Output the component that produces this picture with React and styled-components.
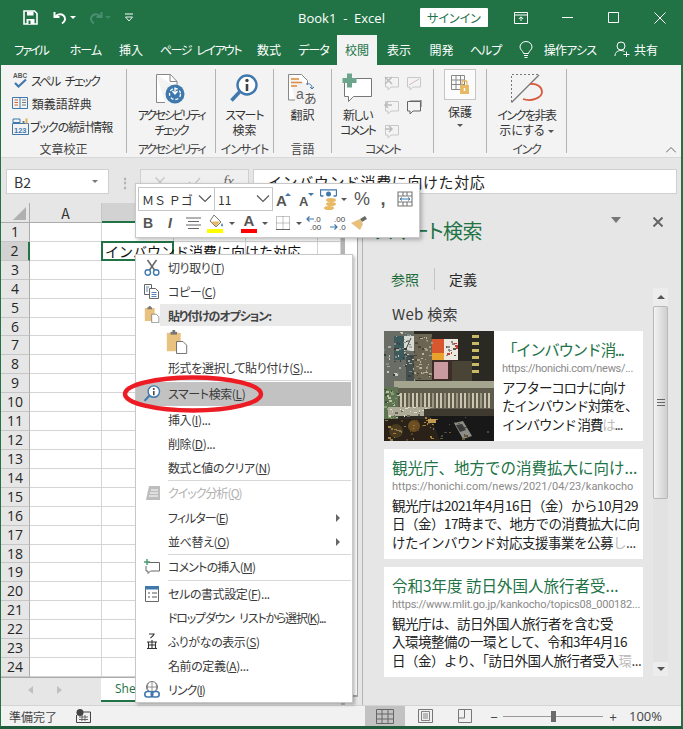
import React from "react";
import styled, { createGlobalStyle } from "styled-components";

const GREEN = "#217346";
const UI_FONT = `"Noto Sans CJK JP", "Noto Sans", sans-serif`;

const GlobalStyle = createGlobalStyle`
    html, body {
        margin: 0;
        padding: 0;
        background: #e6e6e6;
    }
    * {
        box-sizing: border-box;
    }
    body {
        font-family: ${UI_FONT};
        font-feature-settings: "palt";
        color: #262626;
    }
`;

const Root = styled.div`
    position: relative;
    width: 683px;
    height: 729px;
    overflow: hidden;
    display: flex;
    flex-direction: column;
    background: #e6e6e6;
    border-left: 1px solid ${GREEN};
    border-right: 2px solid ${GREEN};
    border-bottom: 3px solid #1f5c3c;
`;

// kana in the original UI font is a lot narrower, so squeeze per string
const Track = styled.span`
    letter-spacing: ${p => p.$t}px;
    word-spacing: 4px;
`;

/* title bar */
const TitleBar = styled.header`
    height: 35px;
    flex: none;
    margin: 0 -2px 0 -1px;
    display: flex;
    align-items: center;
    background: ${GREEN};
    color: #fff;
    font-size: 13px;
`;

const Slot = styled.div`
    width: ${p => p.$w}px;
    flex: none;
    display: flex;
    align-items: center;
    justify-content: center;
`;

const Mirror = styled.span`
    display: flex;
    transform: scaleX(-1);
`;

const WindowTitle = styled.div`
    width: 143px;
    flex: none;
    text-align: center;
    white-space: pre;
    font-family: "Open Sans", ${UI_FONT};
    font-size: 13px;
`;

const SignIn = styled.div`
    width: 68px;
    height: 19px;
    flex: none;
    background: #fff;
    border-radius: 1px;
    color: ${GREEN};
    font-size: 12px;
    line-height: 19px;
    text-align: center;
`;

/* ribbon tabs */
const TabRow = styled.nav`
    height: 30px;
    flex: none;
    margin: 0 -2px 0 -1px;
    display: flex;
    align-items: stretch;
    background: ${GREEN};
`;

const Tab = styled.div`
    width: ${p => p.$w}px;
    flex: none;
    display: flex;
    align-items: center;
    justify-content: center;
    gap: 4px;
    padding-bottom: 1px;
    white-space: nowrap;
    overflow: hidden;
    font-size: 12px;
    letter-spacing: ${p => p.$track || 0}px;
    word-spacing: 4px;
    color: ${p => (p.$active ? GREEN : "#fff")};
    background: ${p => (p.$active ? "#f3f3f3" : "transparent")};
`;

/* ribbon */
const Ribbon = styled.section`
    height: 93px;
    flex: none;
    display: flex;
    position: relative;
    background: #f3f3f3;
    padding: 4px 0;
    border-bottom: 1px solid #d8d8d8;
`;

const Group = styled.div`
    width: ${p => p.$w}px;
    flex: none;
    display: flex;
    flex-direction: column;
    align-items: center;
    border-right: ${p => (p.$last ? "none" : "1px solid #b4b4b4")};
`;

const GroupBody = styled.div`
    flex: 1;
    width: 100%;
    display: flex;
    justify-content: center;
    gap: ${p => p.$gap || 0}px;
    min-height: 0;
`;

const GroupLabel = styled.div`
    height: 14px;
    flex: none;
    font-size: 12px;
    line-height: 20px;
    color: #444;
    white-space: nowrap;
`;

const SmallList = styled.div`
    display: flex;
    flex-direction: column;
    gap: 1px;
    width: 100%;
    padding: 0 0 0 11px;
`;

const SmallItem = styled.div`
    height: 22px;
    display: flex;
    align-items: center;
    gap: 1px;
    font-size: 12px;
    white-space: nowrap;
    color: #333;
`;

const BigButton = styled.div`
    display: flex;
    flex-direction: column;
    align-items: center;
    padding-top: ${p => p.$top ?? 4}px;
    font-size: 12px;
    line-height: 15px;
    text-align: center;
    white-space: nowrap;
    color: #333;
`;

const BigIcon = styled.div`
    height: ${p => p.$h || 34}px;
    margin-bottom: ${p => p.$gap ?? 2}px;
    display: flex;
    align-items: center;
    justify-content: center;
`;

const ProtectBox = styled.div`
    width: 32px;
    height: 31px;
    display: flex;
    align-items: center;
    justify-content: center;
    background: #fbfbfb;
    border: 1px solid #c6c6c6;
`;

const CommentGrid = styled.div`
    display: grid;
    grid-template-columns: 22px 22px;
    grid-auto-rows: 24px;
    align-items: center;
    justify-items: center;
    margin-top: 3px;
    margin-left: 2px;
`;

const Caret = styled.span`
    display: inline-block;
    width: 0;
    height: 0;
    margin: ${p => p.$m || "0 0 0 3px"};
    border-left: 3px solid transparent;
    border-right: 3px solid transparent;
    border-top: 3px solid ${p => p.$c || "#555"};
    vertical-align: middle;
`;

const CollapseChevron = styled.svg`
    position: absolute;
    right: 5px;
    bottom: 4px;
`;

/* formula bar */
const FormulaBar = styled.div`
    height: 45px;
    flex: none;
    display: flex;
    align-items: flex-start;
    padding: 11px 4px 0 5px;
    background: #e6e6e6;
`;

const FieldBox = styled.div`
    height: 25px;
    width: ${p => p.$w || "auto"};
    flex: ${p => (p.$w ? "none" : 1)};
    display: flex;
    align-items: center;
    justify-content: space-between;
    padding: 0 ${p => p.$pad || 7}px;
    background: ${p => p.$bg || "#fff"};
    border: 1px solid #d0d0d0;
    font-size: 14px;
    white-space: nowrap;
    color: #333;
`;

const FormulaText = styled.span`
    font-size: 15px;
    letter-spacing: 0.6px;
    font-feature-settings: normal;
    color: #222;
`;

const FxText = styled.span`
    font-family: "Liberation Serif", serif;
    font-style: italic;
    font-size: 15px;
    color: #666;
`;

const Dots = styled.div`
    width: 31px;
    flex: none;
    text-align: center;
    color: #aaa;
    font-size: 12px;
    line-height: 25px;
    font-weight: 700;
`;

/* sheet */
const Workspace = styled.div`
    flex: 1;
    min-height: 0;
    display: flex;
    align-items: stretch;
`;

const SheetColumn = styled.div`
    width: 340px;
    flex: none;
    display: flex;
    flex-direction: column;
`;

const Grid = styled.div`
    height: 474px;
    flex: none;
    display: grid;
    grid-template-columns: 29px 72px 72px 72px 72px 23px;
    grid-template-rows: 20px repeat(24, minmax(0, 1fr));
    background: #fff;
    overflow: hidden;
`;

const Corner = styled.div`
    background: #e6e6e6;
    border-right: 1px solid #ababab;
    border-bottom: 1px solid #ababab;
    display: flex;
    align-items: flex-end;
    justify-content: flex-end;
    padding: 0 3px 2px 0;
`;

const ColHead = styled.div`
    display: flex;
    align-items: center;
    justify-content: center;
    padding-left: ${p => (p.$selected ? "8px" : 0)};
    font-size: 14px;
    line-height: 16px;
    color: #333;
    background: ${p => (p.$selected ? "#d2d2d2" : "#e6e6e6")};
    border-right: 1px solid #c6c6c6;
    border-bottom: ${p => (p.$selected ? `2px solid ${GREEN}` : "1px solid #ababab")};
`;

const RowHead = styled.div`
    display: flex;
    align-items: center;
    justify-content: center;
    font-size: 14px;
    line-height: 16px;
    font-family: "Open Sans", sans-serif;
    color: #262626;
    background: ${p => (p.$selected ? "#d2d2d2" : "#e6e6e6")};
    border-bottom: 1px solid #c6c6c6;
    border-right: ${p => (p.$selected ? `2px solid ${GREEN}` : "1px solid #ababab")};
`;

const Cell = styled.div`
    background: transparent;
    border-right: 1px solid #d4d4d4;
    border-bottom: 1px solid #d4d4d4;
`;

const ActiveCell = styled.div`
    position: relative;
    z-index: 1;
    margin: -1px 0 0 -1px;
    padding: 0 0 0 2px;
    border: 2px solid ${GREEN};
    font-size: 14px;
    font-feature-settings: normal;
    line-height: 16px;
    white-space: nowrap;
    color: #111;
`;

const SheetTabs = styled.div`
    flex: 1;
    display: flex;
    background: #e6e6e6;
    border-top: 1px solid #ababab;
`;

const NavArrows = styled.div`
    width: 100px;
    height: 24px;
    flex: none;
    display: flex;
    align-items: center;
    gap: 24px;
    padding-left: 27px;
`;

const SheetTab = styled.div`
    width: 70px;
    height: 24px;
    padding-left: 14px;
    background: #fff;
    border-bottom: 2px solid ${GREEN};
    color: ${GREEN};
    font-size: 12px;
    line-height: 22px;
    font-family: "Open Sans", sans-serif;
`;

const SheetScroll = styled.div`
    width: 18px;
    flex: none;
    display: flex;
    flex-direction: column;
    background: #e6e6e6;
    border-left: 4px solid #b5b5b5;
    padding-bottom: 29px;
`;

const SheetThumb = styled.div`
    flex: 1;
    margin-top: 20px;
    width: 13px;
    background: #fff;
    border-bottom: 2px solid #a8a8a8;
    border-right: 1px solid #a8a8a8;
`;

/* smart lookup pane */
const Pane = styled.aside`
    flex: 1;
    min-width: 0;
    margin-left: 3px;
    padding: 0 0 0 12px;
    display: flex;
    flex-direction: column;
    background: #e6e6e6;
    border-left: 1px solid #b4b4b4;
    margin-bottom: 2px;
`;

const PaneHead = styled.div`
    height: 56px;
    flex: none;
    display: flex;
    align-items: flex-start;
    padding-top: 14px;
    color: ${GREEN};
    font-size: 20px;
    line-height: 28px;
`;

const PaneTitle = styled.div`
    width: 236px;
    flex: none;
    white-space: nowrap;
    letter-spacing: -0.6px;
`;

const PaneTabs = styled.div`
    height: 22px;
    flex: none;
    margin: 9px 0 0 16px;
    display: flex;
    align-items: center;
    font-size: 14px;
`;

const PaneTab = styled.div`
    padding-right: ${p => (p.$divided ? "15px" : 0)};
    padding-left: ${p => (p.$divided ? 0 : "14px")};
    line-height: 22px;
    color: ${p => (p.$active ? "#1a6a3a" : "#262626")};
    border-right: ${p => (p.$divided ? "1px solid #c4c4c4" : "none")};
`;

const PaneBody = styled.div`
    flex: 1;
    min-height: 0;
    margin-top: -2px;
    display: flex;
    justify-content: space-between;
`;

const Results = styled.div`
    width: 259px;
    margin-left: 9px;
    flex: none;
    display: flex;
    flex-direction: column;
    gap: 8px;
`;

const SectionTitle = styled.div`
    height: 43px;
    margin-left: 8px;
    padding-top: 13px;
    font-size: 15px;
    line-height: 26px;
    color: #3a3a3a;
    letter-spacing: 0.3px;
`;

const Card = styled.article`
    height: 110px;
    flex: none;
    display: flex;
    background: #fff;
`;

const Photo = styled.svg`
    flex: none;
    display: block;
`;

const CardText = styled.div`
    flex: 1;
    min-width: 0;
    padding: 7px 0 0 8px;
    overflow: hidden;
    font-feature-settings: normal;
`;

const CardTitle = styled.div`
    height: 22px;
    font-size: 15.5px;
    line-height: 22px;
    letter-spacing: ${p => p.$track || 0}px;
    color: ${GREEN};
    white-space: nowrap;
`;

const CardUrl = styled.div`
    height: 17.5px;
    font-family: Roboto, sans-serif;
    font-size: 11px;
    line-height: 17px;
    letter-spacing: ${p => p.$track || 0}px;
    color: #8a8a8a;
    white-space: nowrap;
`;

const CardLine = styled.div`
    height: 18.7px;
    font-size: 13.5px;
    line-height: 19px;
    letter-spacing: ${p => p.$track ?? -0.5}px;
    color: #222;
    white-space: nowrap;
`;

const Fade = styled.span`
    color: #bbb;
`;

const PaneScroll = styled.div`
    width: 15px;
    flex: none;
    margin-right: 13px;
    display: flex;
    flex-direction: column;
    align-items: center;
    background: #e2e2e2;
    height: 388px;
`;

const ScrollButton = styled.div`
    height: ${p => p.$h}px;
    width: 100%;
    flex: none;
    display: flex;
    align-items: center;
    justify-content: center;
    background: #ececec;
`;

const PaneThumb = styled.div`
    width: 100%;
    height: 193px;
    flex: none;
    display: flex;
    align-items: center;
    justify-content: center;
    background: linear-gradient(to right, #f2f2f2, #cfcfcf);
    border: 1px solid #b8b8b8;
    border-radius: 2px;
`;

const ScrollFill = styled.div`
    flex: 1;
`;

/* status bar */
const StatusBar = styled.footer`
    position: absolute;
    left: 0;
    right: 0;
    bottom: 0;
    height: 21px;
    display: flex;
    align-items: center;
    background: #f1f1f1;
    border-top: 1px solid #d4d4d4;
    font-size: 12px;
    color: #444;
`;

const StatusText = styled.div`
    width: 75px;
    flex: none;
    padding-left: 8px;
    white-space: nowrap;
`;

const ViewButton = styled.div`
    width: 40px;
    height: 21px;
    flex: none;
    display: flex;
    align-items: center;
    justify-content: center;
    background: ${p => (p.$active ? "#c2c2c2" : "transparent")};
`;

const Zoomer = styled.div`
    width: 100px;
    height: 1px;
    flex: none;
    background: #9a9a9a;
    position: relative;
`;

const ZoomThumb = styled.div`
    position: absolute;
    left: 48px;
    top: -5px;
    width: 5px;
    height: 11px;
    background: #6a6a6a;
`;

const ZoomSign = styled.div`
    width: ${p => p.$w}px;
    flex: none;
    text-align: center;
    font-size: 13px;
    color: #444;
`;

const ZoomValue = styled.div`
    flex: none;
    margin-left: 6px;
    font-family: "Open Sans", sans-serif;
    font-size: 13px;
    color: #444;
`;

/* mini toolbar, floats over the sheet */
const MiniBar = styled.div`
    position: absolute;
    left: 134px;
    top: 183px;
    width: 285px;
    height: 55px;
    z-index: 5;
    padding: 3px;
    display: flex;
    flex-direction: column;
    background: #fff;
    border: 1px solid #c8c8c8;
    box-shadow: 2px 2px 4px rgba(0, 0, 0, 0.25);
`;

const MiniRow = styled.div`
    height: 24px;
    flex: none;
    display: flex;
    align-items: center;
`;

const MiniField = styled.div`
    width: ${p => p.$w}px;
    height: 24px;
    flex: none;
    margin-left: -1px;
    padding: 0 2px 0 3px;
    display: flex;
    align-items: center;
    justify-content: space-between;
    border: 1px solid #c6c6c6;
    font-size: 12px;
    font-feature-settings: normal;
    color: #333;
    white-space: nowrap;
    overflow: hidden;

    & > svg {
        flex: none;
    }
`;

const MiniCell = styled.div`
    width: ${p => p.$w}px;
    flex: none;
    display: flex;
    align-items: center;
    justify-content: center;
    font-size: ${p => p.$size || 14}px;
    font-weight: ${p => p.$weight || 400};
    font-style: ${p => (p.$italic ? "italic" : "normal")};
    font-family: "Liberation Sans", sans-serif;
    color: #555;
`;

const ColorLetter = styled.div`
    display: flex;
    flex-direction: column;
    align-items: center;
    font-size: 15px;
    line-height: 14px;
    font-weight: 700;
    font-family: "Liberation Sans", sans-serif;
    color: #555;
`;

const ColorBar = styled.div`
    width: 16px;
    height: 4px;
    margin-top: 1px;
    background: ${p => p.$c};
`;

/* context menu */
const Menu = styled.ul`
    position: absolute;
    left: 134px;
    top: 254px;
    width: 218px;
    height: 449px;
    z-index: 4;
    margin: 0;
    padding: 1px 0 0;
    list-style: none;
    background: #fff;
    border: 1px solid #c8c8c8;
    box-shadow: 2px 2px 3px rgba(0, 0, 0, 0.25);
`;

const MenuItem = styled.li`
    height: ${p => p.$h || 24}px;
    margin: 0 1px ${p => p.$mb || 0}px 0;
    padding-bottom: 1px;
    display: flex;
    align-items: center;
    background: ${p => (p.$hover ? "#c2c2c2" : "transparent")};
    color: ${p => (p.$disabled ? "#b0b0b0" : "#3a3a3a")};
    font-size: 12px;
    letter-spacing: ${p => p.$track ?? -0.4}px;
    word-spacing: 4px;
    white-space: nowrap;
    position: relative;
`;

const MenuIcon = styled.span`
    width: 32px;
    flex: none;
    display: flex;
    align-items: center;
    justify-content: center;
`;

const MenuHeader = styled.span`
    flex: 1;
    align-self: stretch;
    margin: 0 0 -1px -8px;
    padding-left: 8px;
    display: flex;
    align-items: center;
    background: #e9e9e9;
    font-weight: 700;
    letter-spacing: -1.1px;
    color: #444;
`;

const SubArrow = styled.span`
    position: absolute;
    right: 11px;
    top: 8px;
    width: 0;
    height: 0;
    border-top: 4px solid transparent;
    border-bottom: 4px solid transparent;
    border-left: 4px solid #666;
`;

const MenuSep = styled.li`
    height: 1px;
    margin: ${p => p.$mt || 0}px 1px ${p => p.$mb || 0}px 32px;
    background: #d8d8d8;
`;

const PasteRow = styled.li`
    height: 30px;
    padding: 4px 0 0 30px;
`;

const Mnemonic = styled.u`
    text-underline-offset: 1px;
`;

const Callout = styled.svg`
    position: absolute;
    left: 119px;
    top: 373px;
    z-index: 6;
    pointer-events: none;
`;

/* drawings */
const I = ({ w = 16, h = 16, children, vb }) => (
    <svg width={w} height={h} viewBox={vb || `0 0 ${w} ${h}`} fill="none">
        {children}
    </svg>
);

const SaveIcon = () => (
    <I w={15} h={15}>
        <path d="M1 1h10.500L14 3.500V14H1z" stroke="#fff" strokeWidth="1.600" />
        <path d="M4 1.500h6.500v4H4z" fill="#fff" />
        <path d="M3.500 9h8v5h-8z" fill="#fff" />
        <path d="M5.500 10.500h2v3.500h-2z" fill={GREEN} />
    </I>
);

const UndoIcon = ({ c = "#fff" }) => (
    <I w={15} h={14}>
        <path d="M1.500 1v5h5" stroke={c} strokeWidth="2" />
        <path d="M2 6c2-3 6-3.500 8.500-1.500 2.500 2.500 2 6-1.500 8" stroke={c} strokeWidth="2" />
    </I>
);

const RedoIcon = () => (
    <Mirror>
        <UndoIcon c="#4a9070" />
    </Mirror>
);

const CustomizeIcon = () => (
    <I w={10} h={9}>
        <path d="M1 1h8" stroke="#fff" />
        <path d="M1.500 4h7L5 8z" stroke="#fff" strokeWidth="0.900" />
    </I>
);

const Bulb = () => (
    <I w={14} h={18}>
        <path d="M4.500 12.500C4 9.500 1 9 1 6a6 5.500 0 0 1 12 0c0 3-3 3.500-3.500 6.500z" stroke="#fff" />
        <path d="M5 14.500h4M5.500 16.500h3" stroke="#fff" />
    </I>
);

const Person = () => (
    <I w={16} h={17}>
        <circle cx="7" cy="5" r="4" stroke="#fff" />
        <path d="M1 15c0-4 3-5.500 6-5.500 1.500 0 2.500.3 3.500 1" stroke="#fff" />
        <path d="M12.500 10.500v5.500M9.500 13.500h6" stroke="#fff" />
    </I>
);

const RibbonDisplay = () => (
    <I w={14} h={12}>
        <path d="M.5.500h13v11H.5z" stroke="#fff" />
        <path d="M.5 3h13" stroke="#fff" />
        <path d="M7 9V5M4.800 7L7 4.800 9.200 7" stroke="#fff" />
    </I>
);

const Minimize = () => <I w={11} h={11}><path d="M0 5.500h11" stroke="#fff" /></I>;
const Maximize = () => <I w={11} h={11}><path d="M.5.500h10v10H.5z" stroke="#fff" /></I>;
const CloseIcon = ({ c = "#fff", sw = 1, s = 12 }) => (
    <I w={s} h={s}><path d={`M.5.500L${s - 0.5} ${s - 0.5}M${s - 0.5} .500L.5 ${s - 0.5}`} stroke={c} strokeWidth={sw} /></I>
);

const CheckMark = () => (
    <I w={13} h={10}><path d="M1 5l4 4 7-8" stroke="#c8c8c8" strokeWidth="1.500" /></I>
);

const SpellIcon = () => (
    <I w={18} h={18}>
        <text x="1" y="7" fontSize="6.500" fontWeight="700" fontFamily="Liberation Sans" fill="#555">ABC</text>
        <path d="M3 12l3.500 3.500L14 8.500" stroke="#3f78ad" strokeWidth="2.200" />
    </I>
);

const BookIcon = () => (
    <I w={16} h={14}>
        <path d="M.5 1.500h15v11H.5z" stroke="#3f78ad" />
        <path d="M8 1.500v11" stroke="#3f78ad" />
        <path d="M2.500 4h3.500M2.500 6.500h3.500M2.500 9h3.500" stroke="#d2622a" />
        <path d="M10 4h4M10 6.500h4M10 9h4" stroke="#777" />
    </I>
);

const StatsIcon = () => (
    <I w={17} h={17}>
        <path d="M.5 5.500h16v11H.5z" stroke="#3f78ad" />
        <path d="M1 1h7v3.500H1z" stroke="#3f78ad" />
        <path d="M10.500 3h2v2.500h-2z" fill="#777" />
        <path d="M13.500 .500h2v5h-2z" fill="#e0b060" />
        <text x="2" y="14.500" fontSize="7.500" fontWeight="700" fontFamily="Liberation Sans" fill="#3f78ad">123</text>
    </I>
);

const A11yIcon = () => (
    <I w={30} h={30}>
        <path d="M.5.500h14l6.500 7V14M.5.500V28.500H9" stroke="#888" fill="#fff" />
        <path d="M14 .500v7h7" stroke="#888" />
        <circle cx="19" cy="20" r="9.500" fill="#3f78ad" />
        <circle cx="19" cy="20" r="5.500" stroke="#fff" strokeWidth="1.300" strokeDasharray="3 2" />
        <path d="M19 13.500v6M16.500 17l2.500 3 2.500-3" stroke="#fff" strokeWidth="1.300" />
    </I>
);

const SmartIcon = ({ s = 30 }) => (
    <I w={s} h={s} vb="0 0 30 30">
        <circle cx="18" cy="11" r="9.500" fill="#fff" stroke="#3f78ad" strokeWidth="2.400" />
        <path d="M10.500 18L2.500 26.500" stroke="#3f78ad" strokeWidth="3.500" />
        <circle cx="18" cy="6.500" r="1.700" fill="#444" />
        <path d="M18 10v7" stroke="#444" strokeWidth="2.600" />
    </I>
);

const TranslateIcon = () => (
    <I w={30} h={30}>
        <path d="M.5.500h13l6 6V11M.5.500V26H7" stroke="#888" fill="#fff" />
        <path d="M3 5h8M3 8.500h11M3 12h6" stroke="#e08a3c" strokeWidth="1.300" />
        <text x="8" y="25" fontSize="14" fontFamily="Liberation Sans" fill="#666">a</text>
        <text x="16" y="29" fontSize="13" fontFamily="Noto Sans CJK JP" fill="#555">あ</text>
        <path d="M18 10c4-1 6 1 6 4M22 13l2 2 2-2" stroke="#3f78ad" />
    </I>
);

const NewComment = () => (
    <I w={32} h={31}>
        <path d="M2.500 5.500h27v18h-18l-5 5v-5h-4z" stroke="#777" fill="#fff" />
        <path d="M5 .500h5v4.500h4.500v5H10v4.500H5V10H.5V5H5z" fill="#6aa58c" />
    </I>
);

const SmallComment = ({ kind }) => (
    <I w={16} h={16}>
        <path d="M1.500 1.500h13v9.500H7l-3 3v-3H1.500z" stroke={kind === "on" ? "#666" : "#c8c8c8"} />
        {kind === "x" && <path d="M1 1l7 7M8 1L1 8" stroke="#bbb" strokeWidth="1.500" />}
        {kind === "slash" && <path d="M3 9L13 3" stroke="#d8b8b8" />}
        {kind === "left" && <path d="M8 5H1M4 2L1 5l3 3" stroke="#bbb" strokeWidth="1.500" />}
        {kind === "right" && <path d="M1 5h7M5 2l3 3-3 3" stroke="#bbb" strokeWidth="1.500" />}
        {kind === "on" && <path d="M4 0h11v7" stroke="#666" />}
    </I>
);

const ProtectIcon = () => (
    <I w={18} h={20}>
        <path d="M.5.500h13v14H.5zM.5 5h13M.5 9.500h13M5 .500v14M9.500 .500v14" stroke="#888" />
        <path d="M9 10h9v9H9z" fill="#e8b964" />
        <path d="M11 10V8a2.500 2.500 0 0 1 5 0v2" stroke="#e8b964" strokeWidth="1.300" />
        <path d="M13.500 13v3" stroke="#fff" strokeWidth="1.500" />
    </I>
);

const InkIcon = () => (
    <I w={32} h={30}>
        <path d="M.5 28V.500H27" stroke="#777" strokeDasharray="2 2" />
        <path d="M.5 28.500L28 1" stroke="#777" strokeWidth="1.200" />
        <path d="M19 10c7-1 12 3 12 8 0 6-11 10-19 7" stroke="#d8583a" strokeWidth="1.800" />
    </I>
);

const FontUp = ({ up }) => (
    <I w={15} h={14}>
        <text x="0" y="14" fontSize={up ? 15 : 13} fontWeight="700" fontFamily="Liberation Sans" fill="#555">A</text>
        <path d={up ? "M9 4l3-3 3 3z" : "M9 1h6l-3 3z"} fill="#3f78ad" />
    </I>
);

const FormatCoin = () => (
    <I w={17} h={21}>
        <path d="M.5 7V.800h16V7M.5 7h3M16.500 7h-3" stroke="#3f78ad" strokeWidth="1.300" />
        <circle cx="8.500" cy="5" r="2.500" fill="#3f78ad" />
        <ellipse cx="11" cy="11" rx="5" ry="2" fill="#e8b964" />
        <ellipse cx="11" cy="15" rx="5" ry="2" fill="#e8b964" />
        <ellipse cx="9" cy="19" rx="5" ry="2" fill="#e8b964" />
    </I>
);

const TableFormat = () => (
    <I w={16} h={16}>
        <path d="M1 1h14v14H1zM1 5h14M1 11h14M6 1v4M10 1v4M6 11v4M10 11v4" stroke="#777" strokeWidth="1.100" />
        <path d="M3 8h10M5 6.500L3 8l2 1.500M11 6.500L13 8l-2 1.500" stroke="#3f78ad" />
    </I>
);

const AlignIcon = () => (
    <I w={15} h={13}>
        <path d="M0 1h15M2 4.500h11M0 8h15M2 11.500h11" stroke="#666" />
    </I>
);

const FillIcon = () => (
    <I w={17} h={19}>
        <path d="M7 1l7 7-5 5-6-6z" stroke="#777" fill="#fff" />
        <path d="M4 7.500h9L9 12.500z" fill="#e8b964" />
        <path d="M15 9c1 2 1.500 3 0 3.500-1.500-.5-1-1.500 0-3.500z" fill="#3f78ad" />
        <path d="M0 15h16v4H0z" fill="#ffff00" />
    </I>
);

const BorderIcon = () => (
    <I w={14} h={14}>
        <path d="M.5.500h13v13H.5zM.5 7h13M7 .500v13" stroke="#888" strokeDasharray="1 1" />
        <path d="M0 13.500h14" stroke="#666" />
    </I>
);

const DecimalIcon = ({ more }) => (
    <I w={20} h={16}>
        <text x={more ? 4 : 8} y="7" fontSize="8" fontFamily="Liberation Sans" fill="#444">{more ? ".00" : ".0"}</text>
        <text x={more ? 9 : 4} y="15" fontSize="8" fontFamily="Liberation Sans" fill="#444">{more ? ".0" : ".00"}</text>
        {more
            ? <path d="M0 12h7M4.500 9.500L7 12l-2.500 2.500" stroke="#3f78ad" strokeWidth="1.200" />
            : <path d="M8 4H1M3.500 1.500L1 4l2.500 2.500" stroke="#3f78ad" strokeWidth="1.200" />}
    </I>
);

const BrushIcon = () => (
    <I w={20} h={16}>
        <path d="M10 4l5-3 2 3-5 3z" fill="#6a6a6a" />
        <path d="M1 8l9-4 3 5-3 6z" fill="#e8c07c" />
    </I>
);

const CutIcon = () => (
    <I w={16} h={17}>
        <path d="M3.500 1l7 10M12.500 1l-7 10" stroke="#666" strokeWidth="1.500" />
        <circle cx="3.800" cy="13.500" r="2.700" stroke="#3f78ad" strokeWidth="1.400" />
        <circle cx="12.200" cy="13.500" r="2.700" stroke="#3f78ad" strokeWidth="1.400" />
    </I>
);

const CopyIcon = () => (
    <I w={16} h={15}>
        <path d="M.5.500h7v10H.5z" stroke="#666" />
        <path d="M5.500 4.500h6l3 3v7h-9z" stroke="#666" fill="#fff" />
        <path d="M7.500 8.500h5M7.500 10.500h5M7.500 12.500h5M2 3h3M2 5h2M2 7h2" stroke="#3f78ad" strokeWidth="0.900" />
    </I>
);

const PasteIcon = ({ big }) => (
    <I w={big ? 22 : 16} h={big ? 24 : 17} vb="0 0 22 26">
        <path d="M0 3h15v20H0z" fill="#e9c27f" />
        <path d="M4 2h7v3H4z" fill="#777" />
        <path d="M6 0h3v3H6z" fill="#777" />
        <path d="M10.500 12.500h7l4 4v9h-11z" stroke="#666" fill="#fff" />
    </I>
);

const QuickIcon = () => (
    <I w={15} h={14}>
        <path d="M4 0h11v14H1z" fill="#bdbdbd" />
        <path d="M6 4h7M5 7h8M4 10h9" stroke="#fff" />
    </I>
);

const CommentAdd = () => (
    <I w={16} h={16}>
        <path d="M4 3.500h11.500v8.500H6.500L4 14.500V12H2V7" stroke="#666" />
        <path d="M3 0v6M0 3h6" stroke="#4f9a76" strokeWidth="1.500" />
    </I>
);

const FormatCells = () => (
    <I w={14} h={16}>
        <path d="M.5.500h13v15H.5z" stroke="#666" />
        <path d="M0 0h14v3.500H0z" fill="#3f78ad" />
        <path d="M3 7h2M3 11h2M7 7h5M7 11h5" stroke="#555" />
    </I>
);

const FuriganaIcon = () => (
    <I w={12} h={17}>
        <path d="M3 1h5c-.5 1.500-2 3-3.500 4" stroke="#333" strokeWidth="1.200" />
        <path d="M1 9h10M1 15.500h10M2.500 9v6.500M6 7v8.500M9.500 9v6.500M2.500 12h7" stroke="#333" strokeWidth="1.100" />
    </I>
);

const LinkIcon = () => (
    <I w={16} h={17}>
        <circle cx="8" cy="6" r="5.500" stroke="#777" />
        <path d="M2.500 6h11M8 .500v11M4.500 2c-1.500 2.500-1.500 5.500 0 8M11.500 2c1.500 2.500 1.500 5.500 0 8" stroke="#777" strokeWidth="0.800" />
        <rect x=".8" y="10.500" width="8" height="5.500" rx="2.700" stroke="#3f78ad" strokeWidth="1.600" fill="#fff" />
        <rect x="7.200" y="10.500" width="8" height="5.500" rx="2.700" stroke="#3f78ad" strokeWidth="1.600" />
    </I>
);

const Chevron = () => (
    <I w={14} h={8}><path d="M1 .500l6 6 6-6" stroke="#555" strokeWidth="1.100" /></I>
);

const GridView = () => (
    <I w={18} h={15}><path d="M.5.500h17v14H.5zM.5 5h17M.5 10h17M6 .500v14M12 .500v14" stroke="#666" /></I>
);
const PageView = () => (
    <I w={15} h={14}><path d="M.5.500h14v13H.5z" stroke="#777" /><path d="M3.500 2.500h8v9h-8zM5 5h5M5 7h5M5 9h5" stroke="#777" strokeWidth="0.900" /></I>
);
const BreakView = () => (
    <I w={14} h={14}><path d="M.5.500h13v13H.5zM.5 9h6V.500" stroke="#777" /></I>
);

const MacroIcon = () => (
    <I w={15} h={14}>
        <circle cx="4" cy="3.500" r="3.500" fill="#444" />
        <path d="M7 3h7.500v10.500h-14V6" stroke="#444" />
        <path d="M3 8h9M3 10.500h9M6 6v6M9 6v6" stroke="#666" />
    </I>
);

// night view of the station, drawn roughly from the thumbnail.
// speckle comes from a small fixed generator so the picture stays the same
let seed = 7;
const rnd = n => {
    seed = (seed * 137 + 59) % 1009;
    return seed % n;
};

const speck = (key, x0, y0, w, h, colors, count) =>
    Array.from({ length: count }, (_, i) => (
        <rect
            key={`${key}${i}`}
            x={x0 + rnd(w)}
            y={y0 + rnd(h)}
            width={1 + rnd(3)}
            height={1 + rnd(2)}
            fill={colors[rnd(colors.length)]}
        />
    ));

const lattice = [];
for (let x = 8; x < 108; x += 4) {
    lattice.push(<rect key={`l${x}`} x={x} y="62" width="2" height="15" fill="#e4e0c8" opacity={x % 3 ? 0.8 : 0.45} />);
}
const amberStrip = [];
for (let y = 4; y < 46; y += 7) {
    amberStrip.push(<rect key={`a${y}`} x="88" y={y} width="7" height="3" fill="#c9b864" />);
}

const CityPhoto = () => (
    <Photo width="110" height="110" viewBox="0 0 110 110">
        <rect width="110" height="110" fill="#2d2a26" />
        <rect width="30" height="62" fill="#6a6d66" />
        <rect x="10" y="5" width="11" height="24" fill="#3e5a5c" />
        <rect x="20" y="5" width="10" height="15" fill="#d8dad4" />
        <path d="M22 18l5-11" stroke="#444" />
        <rect x="22" y="24" width="10" height="34" fill="#45504e" />
        <rect x="30" y="3" width="18" height="46" fill="#6b6553" />
        <rect x="48" y="8" width="26" height="21" fill="#ece8e0" />
        <rect x="48" y="8" width="12" height="21" fill="#d8572e" />
        <rect x="48" y="22" width="12" height="7" fill="#e9a22e" />
        <rect x="48" y="29" width="20" height="22" fill="#3d2d28" />
        <rect x="50" y="31" width="14" height="17" fill="#c99aa0" />
        <rect x="74" y="0" width="36" height="50" fill="#2b2924" />
        <rect x="68" y="30" width="20" height="20" fill="#4a4436" />
        {amberStrip}
        {speck("a", 0, 0, 30, 60, ["#a8aca4", "#3a3c38", "#c8c8be", "#7c8c88"], 70)}
        {speck("b", 30, 5, 18, 44, ["#a69c80", "#4a4538", "#c0b69a"], 45)}
        {speck("c", 62, 10, 12, 16, ["#555", "#8a8a8a", "#c04030"], 16)}
        <path d="M10 50h100v7H10z" fill="#a5a48f" />
        <path d="M10 57h100v21H10z" fill="#5f5c4e" />
        {lattice}
        <rect x="0" y="56" width="14" height="32" fill="#5f7452" />
        {speck("d", 0, 56, 14, 32, ["#8aa070", "#3f4f38", "#b8c4a4"], 30)}
        <rect x="4" y="76" width="44" height="9" fill="#aeac98" />
        {speck("e", 4, 76, 44, 9, ["#e0dcc8", "#6a6858"], 26)}
        <rect x="40" y="78" width="70" height="7" fill="#3f3a30" />
        <path d="M0 88h46l10 22H0z" fill="#2a2118" />
        <path d="M46 85h64v25H56z" fill="#191818" />
        <circle cx="30" cy="95" r="6" fill="#6d4f22" />
        <circle cx="12" cy="100" r="7" fill="#4a3a20" />
        {speck("f", 0, 86, 52, 24, ["#a5813c", "#5a4420", "#8a7a58"], 40)}
        <rect x="44" y="88" width="8" height="4" fill="#c09a50" />
        <path d="M70 92l9-2 9 15-9 3z" fill="#8c8c88" />
        <path d="M72 94l6-1 4 6-6 2z" fill="#3a3a3a" />
        {speck("g", 56, 86, 54, 22, ["#4a4a44", "#6a5a34"], 14)}
    </Photo>
);

const GRID_COLS = ["A", "B", "C", "D", "E"];
const ROWS = Array.from({ length: 24 }, (_, i) => i + 1);

const Sheet = () => (
    <Grid>
        <Corner>
            <svg width="13" height="13"><path d="M13 0v13H0z" fill="#b0b0b0" /></svg>
        </Corner>
        {GRID_COLS.map(c => (
            <ColHead key={c} $selected={c === "B"}>{c}</ColHead>
        ))}
        {ROWS.map(r => (
            <React.Fragment key={r}>
                <RowHead $selected={r === 2}>{r}</RowHead>
                {GRID_COLS.map(c =>
                    r === 2 && c === "B" ? (
                        <ActiveCell key={c}>インバウンド消費に向けた対応</ActiveCell>
                    ) : (
                        <Cell key={c} />
                    )
                )}
            </React.Fragment>
        ))}
    </Grid>
);

const TABS = [
    { t: "ファイル", w: 62, track: -2 },
    { t: "ホーム", w: 47, track: -1 },
    { t: "挿入", w: 44 },
    { t: "ページ レイアウト", w: 95, track: -1.5 },
    { t: "数式", w: 42 },
    { t: "データ", w: 47, track: -1 },
    { t: "校閲", w: 40, active: true },
    { t: "表示", w: 44 },
    { t: "開発", w: 41 },
    { t: "ヘルプ", w: 47, track: -1 }
];

const MENU = [
    { t: "切り取り", k: "T", icon: <CutIcon /> },
    { t: "コピー", k: "C", icon: <CopyIcon /> },
    { header: "貼り付けのオプション:", icon: <PasteIcon /> },
    { paste: true },
    { t: "形式を選択して貼り付け", k: "S", dots: true },
    { sep: true, mb: 1 },
    { t: "スマート検索", k: "L", icon: <SmartIcon s={18} />, hover: true, mb: 2 },
    { t: "挿入", k: "I", dots: true },
    { t: "削除", k: "D", dots: true },
    { t: "数式と値のクリア", k: "N" },
    { sep: true },
    { t: "クイック分析", k: "Q", icon: <QuickIcon />, disabled: true, mb: 1, track: -1 },
    { t: "フィルター", k: "E", sub: true, track: -1 },
    { t: "並べ替え", k: "O", sub: true },
    { sep: true },
    { t: "コメントの挿入", k: "M", icon: <CommentAdd />, track: -0.8 },
    { sep: true, mt: 1, mb: 1 },
    { t: "セルの書式設定", k: "F", dots: true, icon: <FormatCells />, track: -0.4 },
    { t: "ドロップダウン リストから選択", k: "K", dots: true, track: -1.2 },
    { t: "ふりがなの表示", k: "S", icon: <FuriganaIcon /> },
    { t: "名前の定義", k: "A", dots: true },
    { t: "リンク", k: "I", icon: <LinkIcon />, track: -1 }
];

const ContextMenu = () => (
    <Menu>
        {MENU.map((m, i) => {
            if (m.sep) return <MenuSep key={i} $mt={m.mt} $mb={m.mb} />;
            if (m.paste) {
                return (
                    <PasteRow key={i}>
                        <PasteIcon big />
                    </PasteRow>
                );
            }
            if (m.header) {
                return (
                    <MenuItem key={i} $h={22}>
                        <MenuIcon>{m.icon}</MenuIcon>
                        <MenuHeader>{m.header}</MenuHeader>
                    </MenuItem>
                );
            }
            return (
                <MenuItem key={i} $hover={m.hover} $disabled={m.disabled} $mb={m.mb} $track={m.track}>
                    <MenuIcon>{m.icon}</MenuIcon>
                    {m.t}(<Mnemonic>{m.k}</Mnemonic>){m.dots ? "..." : ""}
                    {m.sub && <SubArrow />}
                </MenuItem>
            );
        })}
    </Menu>
);

const MiniToolbar = () => (
    <MiniBar>
        <MiniRow>
            <MiniField $w={77}>
                ＭＳ Ｐゴ
                <Chevron />
            </MiniField>
            <MiniField $w={59}>
                11
                <Chevron />
            </MiniField>
            <MiniCell $w={20}><FontUp up /></MiniCell>
            <MiniCell $w={26}><FontUp /></MiniCell>
            <MiniCell $w={18}><FormatCoin /></MiniCell>
            <MiniCell $w={14}><Caret $m="0" /></MiniCell>
            <MiniCell $w={22} $size={18}>%</MiniCell>
            <MiniCell $w={20} $size={18} $weight={700}>,</MiniCell>
            <MiniCell $w={24}><TableFormat /></MiniCell>
        </MiniRow>
        <MiniRow>
            <MiniCell $w={18} $weight={700}>B</MiniCell>
            <MiniCell $w={26} $weight={700} $italic>I</MiniCell>
            <MiniCell $w={20}><AlignIcon /></MiniCell>
            <MiniCell $w={24}><FillIcon /></MiniCell>
            <MiniCell $w={10}><Caret $m="0" /></MiniCell>
            <MiniCell $w={24}>
                <ColorLetter>
                    A
                    <ColorBar $c="#ff0000" />
                </ColorLetter>
            </MiniCell>
            <MiniCell $w={8}><Caret $m="0" /></MiniCell>
            <MiniCell $w={27}><BorderIcon /></MiniCell>
            <MiniCell $w={6}><Caret $m="0" /></MiniCell>
            <MiniCell $w={28}><DecimalIcon /></MiniCell>
            <MiniCell $w={20}><DecimalIcon more /></MiniCell>
            <MiniCell $w={20}><BrushIcon /></MiniCell>
        </MiniRow>
    </MiniBar>
);

const RESULTS = [
    {
        title: "観光庁、地方での消費拡大に向け...",
        url: "https://honichi.com/news/2021/04/23/kankocho",
        lines: [
            "観光庁は2021年4月16日（金）から10月29",
            "日（金）17時まで、地方での消費拡大に向",
            <>けたインバウンド対応支援事業を公募<Fade>し</Fade>...</>
        ]
    },
    {
        title: "令和3年度 訪日外国人旅行者受...",
        url: "https://www.mlit.go.jp/kankocho/topics08_000182...",
        urlTrack: -0.2,
        lines: [
            "観光庁は、訪日外国人旅行者を含む受",
            "入環境整備の一環として、令和3年4月16",
            <>日（金）より、「訪日外国人旅行者受入<Fade>環</Fade>...</>
        ]
    }
];

const App = () => (
    <Root>
        <GlobalStyle />
        <TitleBar>
            <Slot $w={23} />
            <Slot $w={15}><SaveIcon /></Slot>
            <Slot $w={14} />
            <Slot $w={16}><UndoIcon /></Slot>
            <Slot $w={10}><Caret $c="#fff" $m="0" /></Slot>
            <Slot $w={9} />
            <Slot $w={16}><RedoIcon /></Slot>
            <Slot $w={10}><Caret $c="#3d8a63" $m="0" /></Slot>
            <Slot $w={11} />
            <Slot $w={10}><CustomizeIcon /></Slot>
            <Slot $w={136} />
            <WindowTitle>{"Book1  -  Excel"}</WindowTitle>
            <Slot $w={7} />
            <SignIn>サインイン</SignIn>
            <Slot $w={26} />
            <Slot $w={14}><RibbonDisplay /></Slot>
            <Slot $w={34} />
            <Slot $w={11}><Minimize /></Slot>
            <Slot $w={35} />
            <Slot $w={11}><Maximize /></Slot>
            <Slot $w={35} />
            <Slot $w={12}><CloseIcon /></Slot>
        </TitleBar>
        <TabRow>
            {TABS.map(tab => (
                <Tab key={tab.t} $w={tab.w} $active={tab.active} $track={tab.track}>{tab.t}</Tab>
            ))}
            <Tab $w={34}><Bulb /></Tab>
            <Tab $w={54}><Track $t={-0.8}>操作アシス</Track></Tab>
            <Tab $w={78}><Person />共有</Tab>
        </TabRow>
        <Ribbon>
            <Group $w={126}>
                <GroupBody>
                    <SmallList>
                        <SmallItem><SpellIcon /><Track $t={-1.6}>スペル チェック</Track></SmallItem>
                        <SmallItem><BookIcon />&nbsp;類義語辞典</SmallItem>
                        <SmallItem><StatsIcon /><Track $t={-1}>ブックの統計情報</Track></SmallItem>
                    </SmallList>
                </GroupBody>
                <GroupLabel>文章校正</GroupLabel>
            </Group>
            <Group $w={89}>
                <GroupBody>
                    <BigButton>
                        <BigIcon $h={32}><A11yIcon /></BigIcon>
                        <Track $t={-2.2}>アクセシビリティ</Track>
                        <Track $t={-2}>チェック</Track>
                    </BigButton>
                </GroupBody>
                <GroupLabel><Track $t={-2.2}>アクセシビリティ</Track></GroupLabel>
            </Group>
            <Group $w={58}>
                <GroupBody>
                    <BigButton>
                        <BigIcon $h={32}><SmartIcon /></BigIcon>
                        <Track $t={-1}>スマート</Track>
                        検索
                    </BigButton>
                </GroupBody>
                <GroupLabel><Track $t={-1}>インサイト</Track></GroupLabel>
            </Group>
            <Group $w={58}>
                <GroupBody>
                    <BigButton>
                        <BigIcon $h={32}><TranslateIcon /></BigIcon>
                        翻訳
                    </BigButton>
                </GroupBody>
                <GroupLabel>言語</GroupLabel>
            </Group>
            <Group $w={102}>
                <GroupBody $gap={4}>
                    <BigButton $top={3}>
                        <BigIcon $h={33}><NewComment /></BigIcon>
                        <Track $t={-1.5}>新しい</Track>
                        <Track $t={-1.7}>コメント</Track>
                    </BigButton>
                    <CommentGrid>
                        <SmallComment kind="x" />
                        <SmallComment kind="slash" />
                        <SmallComment kind="left" />
                        <SmallComment kind="on" />
                        <SmallComment kind="right" />
                    </CommentGrid>
                </GroupBody>
                <GroupLabel><Track $t={-1.7}>コメント</Track></GroupLabel>
            </Group>
            <Group $w={53}>
                <GroupBody>
                    <BigButton $top={0}>
                        <BigIcon $h={31} $gap={4}><ProtectBox><ProtectIcon /></ProtectBox></BigIcon>
                        保護
                        <Caret $m="5px 0 0" />
                    </BigButton>
                </GroupBody>
                <GroupLabel />
            </Group>
            <Group $w={80}>
                <GroupBody>
                    <BigButton>
                        <BigIcon $h={32}><InkIcon /></BigIcon>
                        <Track $t={-1.5}>インクを非表</Track>
                        <span>示にする<Caret /></span>
                    </BigButton>
                </GroupBody>
                <GroupLabel><Track $t={-1.3}>インク</Track></GroupLabel>
            </Group>
            <CollapseChevron width="10" height="6">
                <path d="M0 5.500L5 .5l5 5" stroke="#666" fill="none" />
            </CollapseChevron>
        </Ribbon>
        <FormulaBar>
            <FieldBox $w="103px">
                B2
                <Caret $m="0 3px 0 0" $c="#777" />
            </FieldBox>
            <Dots>⋮</Dots>
            <FieldBox $w="109px" $bg="#efefef" $pad={14}>
                <CloseIcon c="#c8c8c8" sw={1.500} s={10} />
                <CheckMark />
                <FxText>fx</FxText>
            </FieldBox>
            <Slot $w={4} />
            <FieldBox $pad={13}>
                <FormulaText>インバウンド消費に向けた対応</FormulaText>
            </FieldBox>
        </FormulaBar>
        <Workspace>
            <SheetColumn>
                <Sheet />
                <SheetTabs>
                    <NavArrows>
                        <svg width="5" height="8"><path d="M5 0v8L0 4z" fill="#c0c0c0" /></svg>
                        <svg width="5" height="8"><path d="M0 0v8l5-4z" fill="#c0c0c0" /></svg>
                    </NavArrows>
                    <SheetTab>Sheet1</SheetTab>
                </SheetTabs>
            </SheetColumn>
            <SheetScroll>
                <SheetThumb />
            </SheetScroll>
            <Pane>
                <PaneHead>
                    <PaneTitle>スマート検索</PaneTitle>
                    <Slot $w={10}>
                        <svg width="10" height="6"><path d="M0 0h10L5 6z" fill="#777" /></svg>
                    </Slot>
                    <Slot $w={31} />
                    <Slot $w={12}><CloseIcon c="#666" sw={2} s={10} /></Slot>
                </PaneHead>
                <PaneTabs>
                    <PaneTab $active $divided>参照</PaneTab>
                    <PaneTab>定義</PaneTab>
                </PaneTabs>
                <PaneBody>
                    <Results>
                        <div>
                            <SectionTitle>Web 検索</SectionTitle>
                            <Card>
                                <CityPhoto />
                                <CardText>
                                    <CardTitle $track={-1.4}>「インバウンド消...</CardTitle>
                                    <CardUrl $track={-0.3}>https://honichi.com/news/...</CardUrl>
                                    <CardLine $track={-1.2}>アフターコロナに向け</CardLine>
                                    <CardLine $track={-1.2}>たインバウンド対策を、</CardLine>
                                    <CardLine $track={-1.2}>インバウンド 消費<Fade>は</Fade>...</CardLine>
                                </CardText>
                            </Card>
                        </div>
                        {RESULTS.map(r => (
                            <Card key={r.url}>
                                <CardText>
                                    <CardTitle>{r.title}</CardTitle>
                                    <CardUrl $track={r.urlTrack}>{r.url}</CardUrl>
                                    {r.lines.map((l, i) => (
                                        <CardLine key={i}>{l}</CardLine>
                                    ))}
                                </CardText>
                            </Card>
                        ))}
                    </Results>
                    <PaneScroll>
                        <ScrollButton $h={18}>
                            <svg width="8" height="4"><path d="M0 4h8L4 0z" fill="#555" /></svg>
                        </ScrollButton>
                        <PaneThumb>
                            <svg width="8" height="7"><path d="M0 .5h8M0 3.500h8M0 6.500h8" stroke="#666" /></svg>
                        </PaneThumb>
                        <ScrollFill />
                        <ScrollButton $h={14}>
                            <svg width="8" height="4"><path d="M0 0h8L4 4z" fill="#555" /></svg>
                        </ScrollButton>
                    </PaneScroll>
                </PaneBody>
            </Pane>
        </Workspace>
        <StatusBar>
            <StatusText>準備完了</StatusText>
            <Slot $w={15}><MacroIcon /></Slot>
            <Slot $w={274} />
            <ViewButton $active><GridView /></ViewButton>
            <ViewButton><PageView /></ViewButton>
            <ViewButton><BreakView /></ViewButton>
            <ZoomSign $w={18}>−</ZoomSign>
            <Zoomer><ZoomThumb /></Zoomer>
            <ZoomSign $w={20}>+</ZoomSign>
            <ZoomValue>100%</ZoomValue>
        </StatusBar>
        <MiniToolbar />
        <ContextMenu />
        <Callout width="146" height="44" viewBox="0 0 146 44">
            <ellipse cx="73" cy="21" rx="68" ry="16.500" fill="none" stroke="#ed1c24" strokeWidth="4.500" />
        </Callout>
    </Root>
);

export default App;
